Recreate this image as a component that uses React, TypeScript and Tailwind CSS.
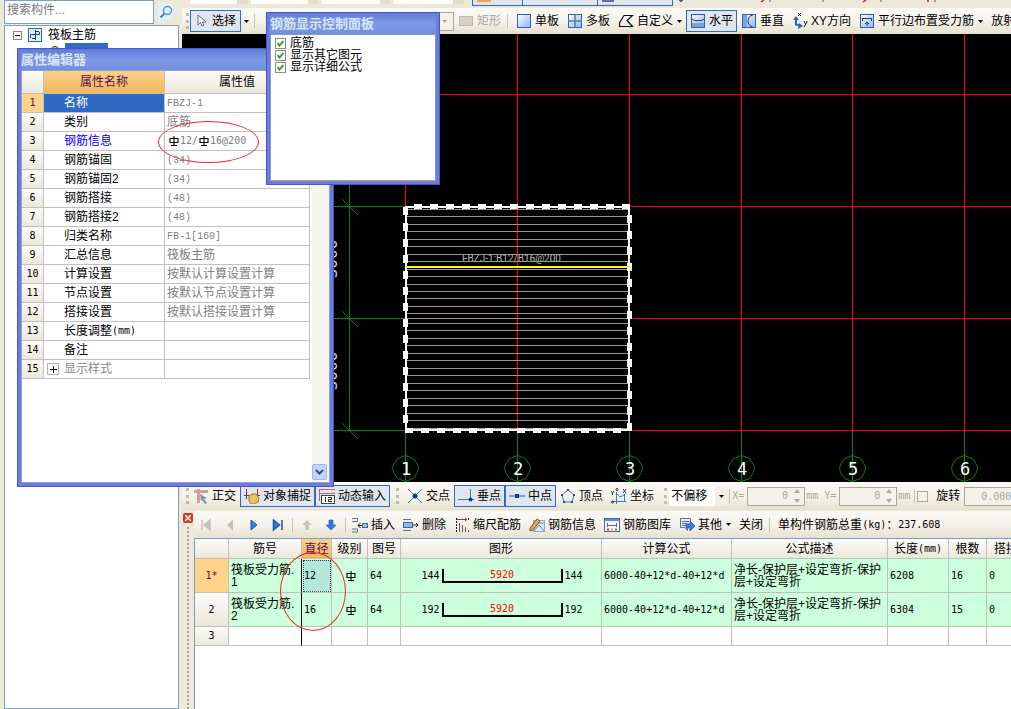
import type { ReactNode } from 'react';
import { clsx } from 'clsx';

const MONO = "font-['DejaVu_Sans_Mono','Noto_Sans_CJK_SC',monospace] text-[10px]";
const BAR = 'bg-linear-to-b from-[#fbfaf6] via-[#f5f3ea] to-[#e6e2d0]';
const HEAD = 'bg-linear-to-b from-[#fcfbf8] to-[#ebe8da]';
const HEAD_ACTIVE = 'bg-linear-to-b from-[#f9d18d] to-[#f0b955] text-[#5c0a5c]';

const PROPERTIES = [
  { name: '名称', value: 'FBZJ-1' },
  { name: '类别', value: '底筋' },
  { name: '钢筋信息', value: '' },
  { name: '钢筋锚固', value: '(34)' },
  { name: '钢筋锚固2', value: '(34)' },
  { name: '钢筋搭接', value: '(48)' },
  { name: '钢筋搭接2', value: '(48)' },
  { name: '归类名称', value: 'FB-1[160]' },
  { name: '汇总信息', value: '筏板主筋' },
  { name: '计算设置', value: '按默认计算设置计算' },
  { name: '节点设置', value: '按默认节点设置计算' },
  { name: '搭接设置', value: '按默认搭接设置计算' },
  { name: '长度调整(mm)', value: '' },
  { name: '备注', value: '' },
  { name: '显示样式', value: '' },
];

const REBARS = [
  { id: '1', diameter: '12', hook: '144', length: '6208', count: '16' },
  { id: '2', diameter: '16', hook: '192', length: '6304', count: '15' },
];

const AXES = [223, 335, 447, 559, 670, 782];
const ROWS = [60, 172, 284, 396];
const BARS = [
  175, 182, 190, 197, 205, 212, 220, 227, 235, 242, 250, 257, 264, 272, 279, 284, 289, 296, 304,
  311, 319, 326, 334, 341, 349, 356, 364, 371, 379, 386, 394,
];

function Icon({ children, w = 16 }: { children: ReactNode; w?: number }) {
  return (
    <svg width={w} height="16" viewBox={`0 0 ${w} 16`} fill="none" className={clsx('shrink-0', w === 16 && '-mr-px')} aria-hidden="true">
      {children}
    </svg>
  );
}

function Tile({ children }: { children?: ReactNode }) {
  return (
    <>
      <rect x="1.5" y="1.5" width="13" height="13" fill="url(#tile)" stroke="#2f5fb8" />
      {children}
    </>
  );
}

function Tool({ icon, label, active, disabled, menu }: { icon?: ReactNode; label: string; active?: boolean; disabled?: boolean; menu?: boolean }) {
  return (
    <button
      type="button"
      disabled={disabled}
      className={clsx(
        'flex h-[22px] shrink-0 items-center gap-1 border px-[3px] whitespace-nowrap',
        active ? 'border-[#316ac5] bg-[#e1e6ed]' : 'border-transparent',
        disabled && 'text-[#aca899]',
      )}
    >
      {icon}
      {label}
      {menu && <Caret />}
    </button>
  );
}

function Caret() {
  return (
    <svg width="5" height="3" viewBox="0 0 5 3" className="shrink-0" aria-hidden="true">
      <path d="M0 0h5L2.5 3z" fill="currentColor" />
    </svg>
  );
}

function Sep() {
  return <span className="mx-0.5 h-3.5 w-px shrink-0 bg-[#c5c2b3]" />;
}

function Grip() {
  return <span className="h-4 w-[3px] shrink-0 border-l-[3px] border-dotted border-[#c0bdac]" />;
}

function Grade() {
  return (
    <svg width="10" height="10" viewBox="0 0 10 10" className="inline-block shrink-0" aria-label="HRB400">
      <path d="M5 0v9M1 2.5h8v4H1zM2 9.500h6" fill="none" stroke="#000" strokeWidth="1.1" />
    </svg>
  );
}

function Spinner({ label }: { label: string }) {
  return (
    <label className="flex shrink-0 items-center gap-[3px] text-[#aca899]">
      <span className={clsx(MONO, 'w-3')}>{label}</span>
      <span className="flex h-[19px] w-[58px] items-center border border-[#aca899] bg-[#f4f2e8] pr-1">
        <input disabled defaultValue="0" className={clsx(MONO, 'w-10 min-w-0 text-right')} />
        <svg width="6" height="14" viewBox="0 0 6 14" className="ml-auto" aria-hidden="true">
          <path d="M0 4h6L3 0zM0 10h6l-3 4z" fill="#aca899" />
        </svg>
      </span>
      <span className={clsx(MONO, '-ml-0.5')}>mm</span>
    </label>
  );
}

function TopStrip() {
  return (
    <div className="flex h-2 shrink-0 items-start overflow-hidden bg-[#ece9d8] pl-2" aria-hidden="true">
      <div className="flex h-1 gap-[3px]">
        <span className="w-[58px] border-r-[11px] border-[#e2decd] bg-white" />
        <span className="w-[68px] border-r-[11px] border-[#e2decd] bg-white" />
        <span className="w-[69px] border-r-[11px] border-[#e2decd] bg-white" />
        <span className="w-[70px] border-r-[11px] border-[#e2decd] bg-white" />
      </div>
      <div className="ml-2 flex h-1.5 border-b border-[#316ac5] bg-[#e1e6ed]">
        <span className="w-[51px] border-x border-[#316ac5] pl-1">
          <span className="block h-0.5 w-3.5 bg-[#f2a44c]" />
        </span>
        <span className="w-[75px] border-r border-[#316ac5]" />
        <span className="w-[75px] border-r border-[#316ac5] pl-1">
          <span className="block h-0.5 w-3 bg-[#5a6f9c]" />
        </span>
      </div>
      <svg width="330" height="4" viewBox="0 0 330 4">
        <path d="M6 0h4l-2 2zM97 0v2M150 0v2M208 0v2M262 0v2" fill="#3461b8" stroke="#3461b8" />
        <path d="M91 0l-3 2M193 0l-3 2M255 0v2" stroke="#c42222" strokeWidth="1.5" />
      </svg>
    </div>
  );
}

function DrawToolbar() {
  return (
    <div className={clsx('flex h-[26px] shrink-0 items-center overflow-hidden pl-1', BAR)}>
      <Grip />
      <button type="button" className="ml-px flex h-[22px] w-[51px] shrink-0 items-center justify-between border border-[#316ac5] bg-[#e1e6ed] px-1">
        <Icon w={12}>
          <path d="M3 2v10l2.500-2.500L7 13l2-1-1.500-3H11z" fill="#fff" stroke="#5a6f8f" />
        </Icon>
        选择
      </button>
      <button type="button" aria-label="选择方式" className="px-[3px]"><Caret /></button>
      <Sep />
      <span className="w-[141px] shrink-0" />
      <select aria-label="绘制方式" disabled className="h-[19px] w-14 shrink-0 appearance-none border border-[#aca899] bg-[#f4f2e8]" />
      <span className="-ml-3 w-3 shrink-0 text-[#aca899]"><Caret /></span>
      <Tool disabled label="矩形" icon={<Icon><rect x="1.500" y="3.500" width="13" height="9" fill="#d3d0c5" stroke="#bdbaac" /></Icon>} />
      <Sep />
      <span className="w-0.5 shrink-0" />
      <Tool label="单板" icon={<Icon><Tile /></Icon>} />
      <Tool label="多板" icon={<Icon><Tile><path d="M8 1.500v13M1 8h14" stroke="#4d7cae" strokeWidth="1.500" /></Tile></Icon>} />
      <Tool menu label="自定义" icon={<Icon><path d="M1.500 13.500V10L6 2.500h8.500L9 7.500l5.500 6z" stroke="#111" strokeWidth="1.200" /></Icon>} />
      <Tool active label="水平" icon={<Icon><Tile><path d="M2 10h12v4H2z" fill="#7ea3dc" /><path d="M2 5.500c0 3 12 3 12 0" stroke="#222f4a" /></Tile></Icon>} />
      <Tool label="垂直" icon={<Icon><Tile><path d="M2 2h4v12H2z" fill="#7ea3dc" /><path d="M11.500 2.500H10C6 5 6 11 10 13.500h1.500" stroke="#222f4a" /></Tile></Icon>} />
      <Tool
        label="XY方向"
        icon={
          <Icon>
            <path d="M4 5v6.500l5 1.500" stroke="#2864c8" strokeWidth="2" />
            <path d="M1 7l3-4 3 4zM7 10l4 3-5 3z" fill="#2864c8" />
            <path d="M6 0l3 3M9 0L6 3M12 8l1.500 3M15.500 8L12 14" stroke="#222" />
          </Icon>
        }
      />
      <Tool menu label="平行边布置受力筋" icon={<Icon><Tile><path d="M3.500 8V5.500h9V8M8 13V9M6 11l2-2 2 2" stroke="#223a78" /></Tile></Icon>} />
      <Tool label="放射筋" />
    </div>
  );
}

function Canvas() {
  return (
    <div className="min-h-0 flex-1 overflow-hidden bg-black">
      <svg width="100%" height="100%" role="img" aria-label="筏板主筋平面图">
        <g stroke="#f00" shapeRendering="crispEdges">
          {AXES.map((x) => <line key={x} x1={x + 0.5} x2={x + 0.5} y1="0" y2="396" />)}
          {ROWS.map((y) => <line key={y} x1="223" x2="100%" y1={y + 0.5} y2={y + 0.5} />)}
        </g>
        <g stroke="#008a00" fill="none">
          {AXES.map((x) => (
            <g key={x}>
              <line x1={x + 0.5} x2={x + 0.5} y1="397" y2="448" />
              <path transform={`translate(${x + 0.5} 434.5)`} d="M0-13L8-10 12-4 13 0 12 4 8 10 0 13-8 10-12 4-13 0-12-4-8-10z" />
            </g>
          ))}
          {ROWS.slice(1).map((y) => (
            <g key={y}>
              <line x1="0" x2="223" y1={y + 0.5} y2={y + 0.5} />
              <line x1="160" x2="176" y1={y - 7} y2={y + 9} />
            </g>
          ))}
          <line x1="167.5" x2="167.500" y1="60" y2="396" />
        </g>
        <g className="fill-white font-['DejaVu_Sans_Mono',monospace] text-[17px]" textAnchor="middle">
          {AXES.map((x, i) => <text key={x} x={x + 1} y="441">{i + 1}</text>)}
        </g>
        <g className="fill-[#ccc] font-['DejaVu_Sans_Mono',monospace] text-[16px]" textAnchor="middle">
          <text transform="translate(155 225) rotate(-90)">3000</text>
          <text transform="translate(155 337) rotate(-90)">3000</text>
        </g>
        <text x="280" y="228" className="fill-[#b8b8b8] font-['Roboto',sans-serif] text-[10px]">FBZJ-1:B12/B16@200</text>
        <g stroke="#a0948e" shapeRendering="crispEdges">
          {BARS.map((y) => <line key={y} x1="225" x2="446" y1={y + 0.5} y2={y + 0.5} />)}
        </g>
        <rect x="224" y="173" width="223" height="223" fill="none" stroke="#fff" strokeWidth="2" />
        <g stroke="#fff" strokeWidth="5" strokeDasharray="8 8">
          <path d="M232 172.500H448" />
          <path d="M223.500 173V396" />
          <path d="M447.500 181V397" />
          <path d="M223 396.500H447" />
        </g>
        <line x1="224" x2="448" y1="233" y2="233" stroke="#ff0" strokeWidth="2" />
      </svg>
    </div>
  );
}

function SnapToolbar() {
  return (
    <div className={clsx('flex h-7 shrink-0 items-center overflow-hidden pl-1', BAR)}>
      <Grip />
      <Tool label="正交" icon={<Icon><path d="M1 3.500h14M5.500 1v14" stroke="#d99a9a" strokeWidth="3" /><path d="M7 6l7 4-3 1 3 4-2 1-3-4-1 1z" fill="#7c93b0" /></Icon>} />
      <Tool active label="对象捕捉" icon={<Icon><path d="M2.500 1v10M13.500 1v8M0 7.500h5M11 7.500h5" stroke="#8b3434" /><path d="M5 8l3-2h4l3 4-1 4-4 2H7l-2-3z" fill="#e8c268" stroke="#a57a26" /></Icon>} />
      <Tool active label="动态输入" icon={<Icon><path d="M0 1.500h16M0 5.500h16M.5 1v12" stroke="#b06a6a" /><rect x="2.500" y="7.500" width="13" height="8" fill="#fff" stroke="#444" /><path d="M6.500 9v5M9 9.500h3.500v2H9.500v2H13" stroke="#222" /></Icon>} />
      <span className="w-1.5 shrink-0" />
      <Grip />
      <span className="w-1 shrink-0" />
      <Tool label="交点" icon={<Icon><path d="M1 1l14 14M15 1L1 15" stroke="#2f7bd0" /><circle cx="8" cy="8" r="2.500" fill="#0a3a9a" /></Icon>} />
      <Tool active label="垂点" icon={<Icon><path d="M12.500 1v11M0 11.500h16" stroke="#2f7bd0" /><circle cx="12.500" cy="11.500" r="2" fill="#0a3a9a" /></Icon>} />
      <Tool active label="中点" icon={<Icon><path d="M0 8h16" stroke="#6aaae6" strokeWidth="2" /><rect x="6" y="6" width="4" height="4" fill="#0a3a9a" /></Icon>} />
      <Tool label="顶点" icon={<Icon><path d="M8 2l6 5-2 7H4L2 7z" stroke="#2f7bd0" /><path d="M7 1h2v2H7zM13 6h2v2h-2zM1 6h2v2H1zM3 13h2v2H3zM11 13h2v2h-2z" fill="#1a4c94" /></Icon>} />
      <Tool label="坐标" icon={<Icon><path d="M0 3l1.500 2L3 3M1.500 5v2M12 1l3 4M15 1l-3 4" stroke="#333" /><path d="M5.500 4v12M1 13.500h14M5 5l4 4 4-2M13.500 6v8" stroke="#2f7bd0" /><circle cx="6" cy="1.500" r="1" stroke="#333" /><circle cx="1.500" cy="14" r="1" stroke="#333" /></Icon>} />
      <span className="w-1.5 shrink-0" />
      <Grip />
      <label className="relative ml-0.5 flex shrink-0 items-center">
        <select aria-label="偏移方式" className="h-[19px] w-[58px] appearance-none bg-white pl-0.5">
          <option>不偏移</option>
        </select>
        <span className="pointer-events-none absolute right-0 flex h-[19px] w-3 items-center justify-center bg-[#f2f0e6]"><Caret /></span>
      </label>
      <Sep />
      <Spinner label="X=" />
      <span className="w-1.5 shrink-0" />
      <Spinner label="Y=" />
      <span className="w-0.5 shrink-0" />
      <Sep />
      <label className="flex shrink-0 items-center gap-2">
        <input type="checkbox" className="size-[11px] appearance-none border border-[#aca899] bg-[#f4f2e8]" />
        旋转
      </label>
      <input aria-label="旋转角度" disabled defaultValue="0.000" className={clsx(MONO, 'ml-1 h-[19px] w-[58px] shrink-0 border border-[#aca899] bg-[#f4f2e8] pl-4 text-[#aca899]')} />
    </div>
  );
}

function Nav({ label, children }: { label: string; children: ReactNode }) {
  return (
    <button type="button" aria-label={label} className="flex w-6 shrink-0 justify-center">
      <Icon w={12}>{children}</Icon>
    </button>
  );
}

function RebarToolbar() {
  return (
    <div className={clsx('flex h-[27px] shrink-0 items-center overflow-hidden', BAR)}>
      <Nav label="首条"><path d="M2 3v10M10 3L4 8l6 5z" fill="#c4c2b8" stroke="#c4c2b8" strokeWidth="1.500" /></Nav>
      <Nav label="上一条"><path d="M9 2.500L3 8l6 5.500z" fill="#c4c2b8" /></Nav>
      <Nav label="下一条"><path d="M3 3l6 5-6 5z" fill="#2f7cf0" stroke="#1c54c0" /></Nav>
      <Nav label="末条"><path d="M1.500 3l6 5-6 5zM10 3v10" fill="#2f7cf0" stroke="#1c54c0" strokeWidth="1.500" /></Nav>
      <Sep />
      <Nav label="上移"><path d="M6 3l5 5H8v5H4V8H1z" fill="#c9c7bd" /></Nav>
      <Nav label="下移"><path d="M6 13l5-5H8V3H4v5H1z" fill="#3478e6" stroke="#1c54c0" strokeWidth=".6" /></Nav>
      <Sep />
      <Tool label="插入" icon={<Icon><path d="M0 1.500h5.500v3H0M0 12h5.500v3H0" stroke="#5575a5" /><path d="M6 8.500h5M8.500 6L6 8.500 8.500 11" stroke="#222" /><rect x="10.500" y="6.500" width="5" height="4" fill="#9fc1ee" stroke="#3b66a8" /></Icon>} />
      <Tool label="删除" icon={<Icon><path d="M0 2.500h8M0 13.500h8" stroke="#5575a5" /><rect x=".5" y="5.500" width="9" height="5" fill="#8fb6ea" stroke="#3b66a8" /><path d="M10 8h5M13 6l2 2-2 2" stroke="#222" /></Icon>} />
      <Tool label="缩尺配筋" icon={<Icon><path d="M2.500 1v14M14.500 1v3" stroke="#222" strokeDasharray="2 1" /><path d="M3 2.500h10M11 1l2 1.500L11 4" stroke="#b22" /><path d="M5.500 6v9M8.500 8v7M11.500 10v5M14.500 13v2" stroke="#555" /></Icon>} />
      <Tool label="钢筋信息" icon={<Icon><rect x="4.500" y="3.500" width="11" height="11" fill="#dbe8f8" stroke="#8fabd2" /><path d="M5 14l5-6 5 6M9 6h6" stroke="#5b86c4" /><path d="M1 11L8 2l3 2-7 9-3 1z" fill="#e9a537" stroke="#6b3f13" strokeWidth=".8" /></Icon>} />
      <Tool label="钢筋图库" icon={<Icon><rect x=".5" y="1.500" width="15" height="13" fill="#f3f6fa" stroke="#46699c" /><path d="M1 3h14" stroke="#5b8fd8" strokeWidth="2" /><path d="M3.500 6v4M12.500 6v4M4 8.500h8" stroke="#666" /><path d="M3 12.500h2" stroke="#d33" strokeWidth="2" /><path d="M7 12.500h2" stroke="#e9b020" strokeWidth="2" /><path d="M11 12.500h2" stroke="#3a4" strokeWidth="2" /></Icon>} />
      <Tool menu label="其他" icon={<Icon><path d="M1.500 1.500h10v9h-3v3l-3-3h-4z" fill="#e8eef7" stroke="#5a7096" /><path d="M3 4.500h7M3 6.500h5M3 8.500h4" stroke="#5a7096" /><path d="M7 7h4V4l5 5-5 5v-3H7z" fill="#3f7be0" stroke="#1d4ca0" strokeWidth=".7" /></Icon>} />
      <Tool label="关闭" />
      <Sep />
      <span className="ml-1.5 flex items-center whitespace-nowrap">单构件钢筋总重<span className={MONO}>(kg)</span>：<span className={MONO}>237.608</span></span>
    </div>
  );
}

function HookShape({ hook }: { hook: string }) {
  return (
    <div className="flex items-center justify-center gap-0.5">
      <span>{hook}</span>
      <span className="h-3.5 w-[121px] border-x-2 border-b-2 border-black text-center leading-3 text-[#f00]">5920</span>
      <span>{hook}</span>
    </div>
  );
}

function RebarTable() {
  const th = 'border-r border-b border-[#c0c0c0] p-0 text-center font-normal';
  const td = clsx('border-r border-b border-[#c0c0c0] bg-[#ccffdb] p-0 pl-0.5', MONO);
  return (
    <table className="w-full min-w-[831px] table-fixed border-separate border-spacing-0">
      <colgroup>
        <col className="w-[34px]" />
        <col className="w-[73px]" />
        <col className="w-[30px]" />
        <col className="w-9" />
        <col className="w-[33px]" />
        <col />
        <col className="w-[130px]" />
        <col className="w-[156px]" />
        <col className="w-[61px]" />
        <col className="w-[38px]" />
        <col className="w-[39px]" />
      </colgroup>
      <thead>
        <tr className="h-5">
          {['', '筋号', '直径', '级别', '图号', '图形', '计算公式', '公式描述', '长度(mm)', '根数', '搭接'].map((h) => (
            <th key={h} className={clsx(th, h === '直径' ? HEAD_ACTIVE : HEAD)}>
              {h === '长度(mm)' ? <span className="flex items-center justify-center">长度<span className={MONO}>(mm)</span></span> : h}
            </th>
          ))}
        </tr>
      </thead>
      <tbody>
        {REBARS.map((r, i) => (
          <tr key={r.id} className="h-[34px] leading-3">
            <th className={clsx(th, MONO, i === 0 ? 'bg-[#ffd38a] text-[#5c0a5c]' : HEAD)}>{i === 0 ? '1*' : r.id}</th>
            <td className="border-r border-b border-[#c0c0c0] border-r-black bg-[#ccffdb] p-0 pl-0.5 align-middle whitespace-nowrap">
              筏板受力筋.<br />{r.id}
            </td>
            <td className={clsx(td, i === 0 && 'outline-1 -outline-offset-2 outline-dotted outline-[#403060]')}>
              <span className={clsx('flex h-[31px] items-center', i === 0 && 'bg-[#b4e6d8]')}>{r.diameter}</span>
            </td>
            <td className={clsx(td, 'text-center')}><Grade /></td>
            <td className={td}>64</td>
            <td className={td}><HookShape hook={r.hook} /></td>
            <td className={clsx(td, 'whitespace-nowrap')}>6000-40+12*d-40+12*d</td>
            <td className="border-r border-b border-[#c0c0c0] bg-[#ccffdb] p-0 pl-0.5 whitespace-nowrap">
              净长-保护层+设定弯折-保护<br />层+设定弯折
            </td>
            <td className={td}>{r.length}</td>
            <td className={td}>{r.count}</td>
            <td className={td}>0</td>
          </tr>
        ))}
        <tr className="h-[19px]">
          <th className={clsx(th, MONO, HEAD)}>3</th>
          {Array.from({ length: 10 }, (_, i) => (
            <td key={i} className={clsx('border-r border-b border-[#c0c0c0] bg-white p-0', i === 0 && 'border-r-black')} />
          ))}
        </tr>
      </tbody>
    </table>
  );
}

function RebarPanel() {
  return (
    <section className="relative flex h-[199px] shrink-0 bg-[#ece9d8] pt-px">
      <div className="flex w-3 shrink-0 flex-col items-center gap-1 pt-0.5">
        <button type="button" aria-label="关闭面板" className="flex size-[10px] items-center justify-center rounded-xs bg-[#d63a1c]">
          <svg width="6" height="6" viewBox="0 0 6 6" aria-hidden="true"><path d="M0 0l6 6M6 0L0 6" stroke="#fff" strokeWidth="1.500" /></svg>
        </button>
        <span className="flex-1 border-l-2 border-dotted border-[#a9a695]" />
      </div>
      <div className="flex min-w-0 flex-1 flex-col">
        <RebarToolbar />
        <div className="flex-1 overflow-hidden border-t border-l border-[#7f9db9] bg-white">
          <RebarTable />
        </div>
      </div>
      <span className="pointer-events-none absolute top-[42px] left-[98px] h-[79px] w-[66px] rounded-[50%] border border-[#f22]" />
    </section>
  );
}

function Sidebar() {
  return (
    <aside className="flex w-[182px] shrink-0 flex-col bg-[#ece9d8] pr-[3px] pl-1">
      <div className="flex h-[25px] items-start gap-1">
        <input aria-label="搜索构件" placeholder="搜索构件..." className="h-6 w-[150px] border border-[#7f9db9] bg-white pb-1 pl-0.5 placeholder:text-[#777]" />
        <button type="button" aria-label="搜索" className="mt-1 flex size-[15px] items-center justify-center bg-[#e3f1fb]">
          <svg width="14" height="14" viewBox="0 0 14 14" aria-hidden="true">
            <circle cx="8.500" cy="5.500" r="4" fill="#dff1ff" stroke="#4b9bd6" strokeWidth="1.500" />
            <path d="M5.500 8.500L1.500 12.500" stroke="#3a86c4" strokeWidth="2" />
          </svg>
        </button>
      </div>
      <div className="flex-1 border border-[#7f9db9] bg-white pt-px pl-2">
        <div className="flex h-4 items-center gap-1.5">
          <button type="button" aria-label="折叠" className="flex size-[9px] items-center justify-center border border-[#848484] bg-white">
            <span className="h-px w-[5px] bg-black" />
          </button>
          <Icon w={14}>
            <rect x=".5" y="1.500" width="13" height="13" fill="#e2efff" stroke="#2d62c4" />
            <path d="M7.500 3v10M2.500 11V7.500h9V5M4 11.500h4M8 4.500h3" stroke="#123f8c" />
          </Icon>
          筏板主筋
        </div>
        <div className="flex h-4 items-center pl-9">
          <svg width="12" height="12" viewBox="0 0 12 12" aria-hidden="true">
            <circle cx="6" cy="6" r="4.500" fill="#e8d24a" stroke="#3a3a10" />
          </svg>
          <span className="ml-1 h-4 w-[43px] bg-[#316ac5]" />
        </div>
      </div>
    </aside>
  );
}

function WindowTitle({ children }: { children: string }) {
  return (
    <h2 className="h-[22px] bg-linear-to-b from-[#5c78d6] via-[#7c9ae4] to-[#7390e0] pt-0.5 text-[13px] leading-5 font-bold text-[#d8e4fa]">
      {children}
    </h2>
  );
}

function PropertyWindow() {
  return (
    <section className="absolute top-12 left-[17px] flex h-[439px] w-[317px] flex-col border-x-4 border-b-4 border-[#6a7ddc] outline-1 -outline-offset-1 outline-[#4b55c4]">
      <WindowTitle>属性编辑器</WindowTitle>
      <div className="flex min-h-0 flex-1 border border-[#8fa3c8] bg-white">
        <div className="flex-1 pr-0.5">
          <table className="w-full table-fixed border-separate border-spacing-0">
            <colgroup>
              <col className="w-[22px]" />
              <col className="w-[121px]" />
              <col />
            </colgroup>
            <thead>
              <tr className="h-[23px]">
                <th className={clsx('border-r border-b border-[#c0c0c0] p-0', HEAD)} />
                <th className={clsx('border-r border-b border-[#c0c0c0] p-0 font-normal', HEAD_ACTIVE)}>属性名称</th>
                <th className={clsx('border-r border-b border-[#c0c0c0] p-0 font-normal', HEAD)}>属性值</th>
              </tr>
            </thead>
            <tbody>
              {PROPERTIES.map((p, i) => (
                <tr key={p.name} className="h-[19px] leading-4">
                  <th className={clsx('border-r border-b border-[#c0c0c0] p-0 text-center font-normal', MONO, i === 0 ? 'bg-[#ffd38a] text-[#5c0a5c]' : HEAD)}>
                    {i + 1}
                  </th>
                  <td
                    className={clsx(
                      'relative border-r border-b border-[#c0c0c0] p-0 pl-5',
                      i === 0 && 'bg-[#316ac5] text-white',
                      i === 2 && 'text-[#00f]',
                      i === 14 && 'text-[#888]',
                    )}
                  >
                    {i === 14 && (
                      <button type="button" aria-label="展开" className="absolute top-[3px] left-[3px] flex size-3 items-center justify-center border border-[#b0b0b0] text-black">
                        <svg width="7" height="7" viewBox="0 0 7 7" aria-hidden="true"><path d="M0 3.500h7M3.500 0v7" stroke="#000" /></svg>
                      </button>
                    )}
                    {i === 12 ? <span className="flex items-center">长度调整<span className={MONO}>(mm)</span></span> : p.name}
                  </td>
                  <td className="border-r border-b border-[#c0c0c0] p-0 pl-0.5 text-[#808080]">
                    {i === 2 ? (
                      <span className={clsx('flex items-center gap-px pl-0.5', MONO)}>
                        <Grade />12/<Grade />16@200
                      </span>
                    ) : (
                      <span className={clsx(/^[\x20-\x7e]*$/.test(p.value) && "font-['Liberation_Mono',monospace] text-[10px]")}>{p.value}</span>
                    )}
                  </td>
                </tr>
              ))}
            </tbody>
          </table>
        </div>
        <div className="flex w-[17px] shrink-0 flex-col justify-end bg-[#f5f4ef] pb-0.5">
          <button type="button" aria-label="向下滚动" className="flex h-4 w-[15px] items-center justify-center rounded-xs border border-[#9db8ee] bg-[#c1d3fb]">
            <svg width="9" height="6" viewBox="0 0 9 6" aria-hidden="true"><path d="M1 1l3.500 3.500L8 1" fill="none" stroke="#38507c" strokeWidth="2" /></svg>
          </button>
        </div>
      </div>
      <span className="pointer-events-none absolute top-[73px] left-[137px] h-[42px] w-[101px] rounded-[50%] border border-[#f22]" />
    </section>
  );
}

function DisplayWindow() {
  return (
    <section className="absolute top-3 left-[266px] flex h-[173px] w-[174px] flex-col border-x-4 border-b-4 border-[#6a7ddc] outline-1 -outline-offset-1 outline-[#4b55c4]">
      <WindowTitle>钢筋显示控制面板</WindowTitle>
      <div className="flex-1 border border-[#7f9db9] border-b-[#aca899] bg-white pt-0.5 pl-1">
        {['底筋', '显示其它图元', '显示详细公式'].map((label) => (
          <label key={label} className="flex h-3 items-center gap-1 whitespace-nowrap">
            <span className="relative flex size-[11px]">
              <input type="checkbox" defaultChecked className="size-[11px] appearance-none border border-[#8a8f80] bg-white" />
              <svg width="7" height="7" viewBox="0 0 7 7" className="pointer-events-none absolute top-0.5 left-0.5" aria-hidden="true">
                <path d="M.5 3l2 2.500L6.500 1" fill="none" stroke="#1f9a1f" strokeWidth="1.800" />
              </svg>
            </span>
            {label}
          </label>
        ))}
      </div>
    </section>
  );
}

export default function App() {
  return (
    <div className="relative flex h-screen overflow-hidden bg-[#ece9d8] font-['Liberation_Sans','Noto_Sans_CJK_SC',sans-serif] text-[12px] leading-4 text-black">
      <svg width="0" height="0" className="absolute" aria-hidden="true">
        <linearGradient id="tile" x1="0" y1="0" x2="1" y2="1">
          <stop offset="0" stopColor="#fff" />
          <stop offset="1" stopColor="#8fb4ee" />
        </linearGradient>
      </svg>
      <Sidebar />
      <main className="flex min-w-0 flex-1 flex-col">
        <TopStrip />
        <DrawToolbar />
        <Canvas />
        <SnapToolbar />
        <RebarPanel />
      </main>
      <PropertyWindow />
      <DisplayWindow />
    </div>
  );
}
